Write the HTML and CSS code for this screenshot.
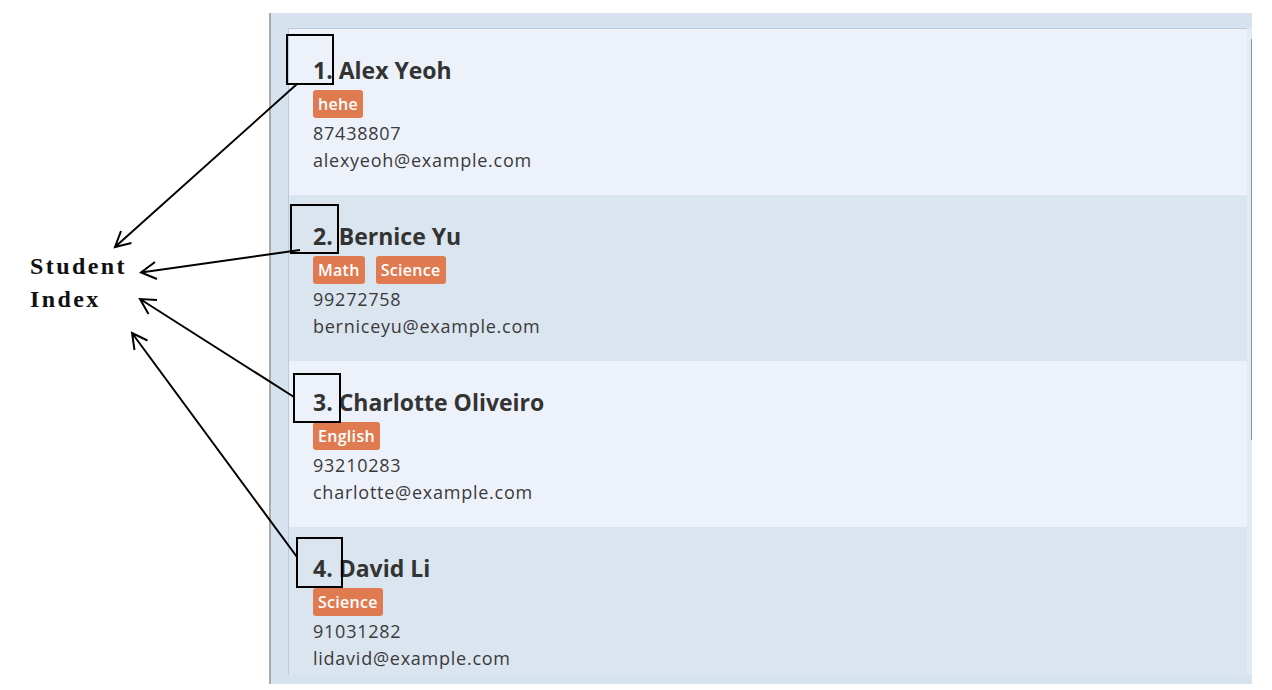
FILE: index.html
```html
<!DOCTYPE html>
<html lang="en">
<head>
<meta charset="utf-8">
<title>Student Index</title>
<link rel="stylesheet" href="styles.css">
</head>
<body>
<div class="page">
  <div class="side">
    <div class="label">Student<br>Index</div>
  </div>
  <div class="panel">
    <div class="list">
      <div class="card light">
        <div class="name">1. Alex Yeoh</div>
        <div class="tags"><span class="tag">hehe</span></div>
        <div class="detail">87438807</div>
        <div class="detail">alexyeoh@example.com</div>
      </div>
      <div class="card dark">
        <div class="name">2. Bernice Yu</div>
        <div class="tags"><span class="tag">Math</span><span class="tag">Science</span></div>
        <div class="detail">99272758</div>
        <div class="detail">berniceyu@example.com</div>
      </div>
      <div class="card light">
        <div class="name">3. Charlotte Oliveiro</div>
        <div class="tags"><span class="tag">English</span></div>
        <div class="detail">93210283</div>
        <div class="detail">charlotte@example.com</div>
      </div>
      <div class="card dark">
        <div class="name">4. David Li</div>
        <div class="tags"><span class="tag">Science</span></div>
        <div class="detail">91031282</div>
        <div class="detail">lidavid@example.com</div>
      </div>
    </div>
    <div class="track"><div class="thumb"></div></div>
  </div>
</div>
<svg class="annot" width="1272" height="690" viewBox="0 0 1272 690" xmlns="http://www.w3.org/2000/svg">
  <g fill="none" stroke="#000" stroke-width="2">
    <rect x="287" y="35" width="46" height="49"/>
    <rect x="291" y="205" width="47" height="48"/>
    <rect x="294" y="374" width="46" height="48"/>
    <rect x="297" y="538" width="45" height="49"/>
    <path d="M297 84 L115 247 M131.5 243 L115 247 L121 231"/>
    <path d="M300 250 L141 272.5 M155 262 L141 272.5 L157 279"/>
    <path d="M294 397 L140 299 M157 300 L140 299 L148.5 314"/>
    <path d="M297 557 L132 333 M147.5 340.5 L132 333 L134.5 350"/>
  </g>
</svg>
</body>
</html>
```
FILE: styles.css
```css
html, body {
  margin: 0;
  padding: 0;
  background: #ffffff;
}
body {
  width: 1272px;
  height: 690px;
  position: relative;
  overflow: hidden;
}
.page {
  display: flex;
  align-items: flex-start;
}
.side {
  width: 269px;
  flex: none;
  padding: 250px 0 0 30px;
  box-sizing: border-box;
}
.label {
  font-family: "Liberation Serif", "DejaVu Serif", serif;
  font-weight: bold;
  font-size: 24px;
  line-height: 33px;
  letter-spacing: 2.4px;
  color: #111;
}
.panel {
  margin-top: 13px;
  width: 983px;
  height: 671px;
  box-sizing: border-box;
  background: #d6e2ee;
  border-left: 2px solid #a9acaf;
  padding: 15px 0 9px 17px;
  display: flex;
}
.list {
  flex: 1;
  overflow: hidden;
  border-top: 1px solid #b9cbde;
  border-left: 1px solid #b9cbde;
  display: flex;
  flex-direction: column;
}
.track {
  width: 5px;
  flex: none;
  background: #e2eaf2;
  display: flex;
  flex-direction: column;
  align-items: flex-end;
  padding-top: 11px;
  box-sizing: border-box;
}
.thumb {
  width: 1px;
  height: 401px;
  background: #8e9195;
}
.card {
  height: 166px;
  flex: none;
  box-sizing: border-box;
  padding: 26px 0 0 24px;
  font-family: "Open Sans", "Noto Sans", sans-serif;
  color: #3a3a3a;
}
.card.light { background: #edf2fa; }
.card.dark { background: #dae5ef; }
.name {
  font-size: 23px;
  font-weight: bold;
  line-height: 30px;
  color: #333333;
}
.tags {
  display: flex;
  gap: 11px;
  margin: 5px 0 2px;
}
.tag {
  background: #df7a51;
  color: #ffffff;
  font-size: 16px;
  font-weight: 600;
  line-height: 28px;
  height: 28px;
  padding: 0 5px;
  border-radius: 3px;
  letter-spacing: 0.3px;
}
.detail {
  font-size: 18px;
  line-height: 27px;
  letter-spacing: 0.75px;
}
.annot {
  position: absolute;
  left: 0;
  top: 0;
  pointer-events: none;
}
```
